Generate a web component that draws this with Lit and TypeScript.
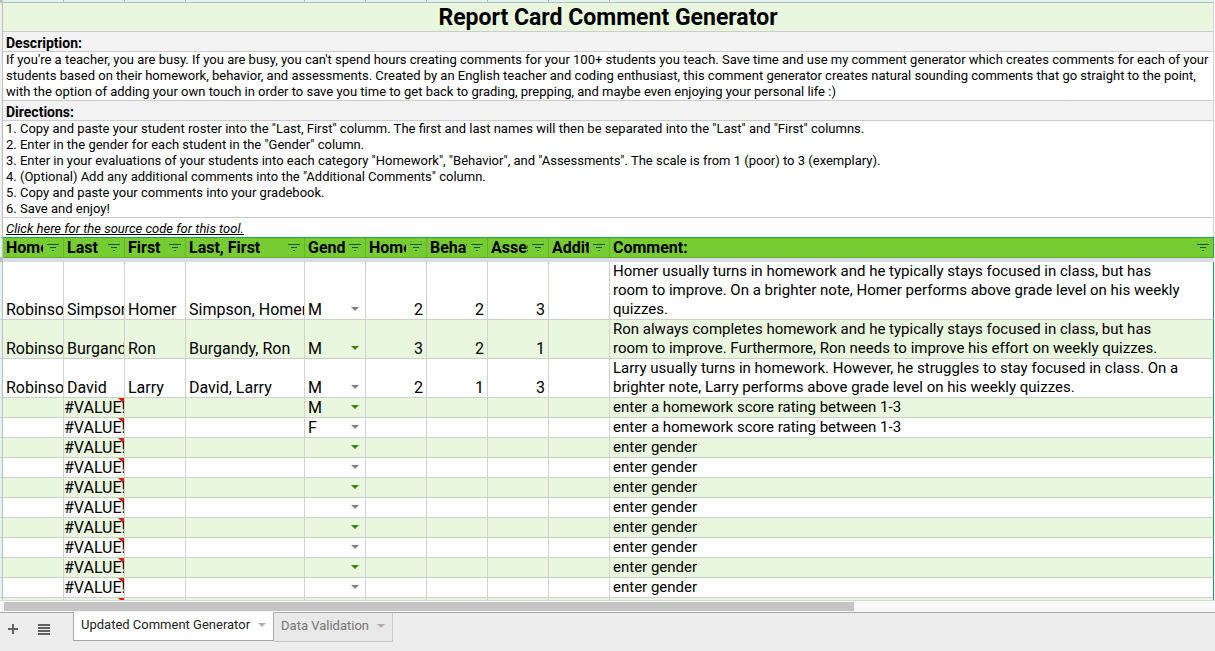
import { LitElement, html, css, svg } from "lit";
import { customElement, property, state } from "lit/decorators.js";
import { classMap } from "lit/directives/class-map.js";

interface Student {
  teacher?: string;
  last?: string;
  first?: string;
  full?: string;
  gender?: string;
  scores?: number[];
  comment: string;
}

const COLUMNS = ["Homeroom", "Last", "First", "Last, First", "Gender", "Homework", "Behavior", "Assessments", "Additional", "Comment:"];

const STUDENTS: Student[] = [
  {
    teacher: "Robinson", last: "Simpson", first: "Homer", full: "Simpson, Homer", gender: "M", scores: [2, 2, 3],
    comment: "Homer usually turns in homework and he typically stays focused in class, but has room to improve. On a brighter note, Homer performs above grade level on his weekly quizzes.",
  },
  {
    teacher: "Robinson", last: "Burgandy", first: "Ron", full: "Burgandy, Ron", gender: "M", scores: [3, 2, 1],
    comment: "Ron always completes homework and he typically stays focused in class, but has room to improve. Furthermore, Ron needs to improve his effort on weekly quizzes.",
  },
  {
    teacher: "Robinson", last: "David", first: "Larry", full: "David, Larry", gender: "M", scores: [2, 1, 3],
    comment: "Larry usually turns in homework. However, he struggles to stay focused in class. On a brighter note, Larry performs above grade level on his weekly quizzes.",
  },
  { gender: "M", comment: "enter a homework score rating between 1-3" },
  { gender: "F", comment: "enter a homework score rating between 1-3" },
  ...Array.from({ length: 9 }, () => ({ comment: "enter gender" })),
];

const DIRECTIONS = [
  '1. Copy and paste your student roster into the "Last, First" columm. The first and last names will then be separated into the "Last" and "First" columns.',
  '2. Enter in the gender for each student in the "Gender" column.',
  '3. Enter in your evaluations of your students into each category "Homework", "Behavior", and "Assessments". The scale is from 1 (poor) to 3 (exemplary).',
  '4. (Optional) Add any additional comments into the "Additional Comments" column.',
  "5. Copy and paste your comments into your gradebook.",
  "6. Save and enjoy!",
];

@customElement("sheet-table")
export class SheetTable extends LitElement {
  @property({ attribute: false }) students: Student[] = [];

  static styles = css`
    :host { display: block; }
    table { width: 100%; table-layout: fixed; border-collapse: separate; border-spacing: 0; font-size: 16px; line-height: 19px; }
    .c-edge { width: 3px; }
    .c-std { width: 61px; }
    .c-wide { width: 119px; }
    th, td {
      box-sizing: border-box; padding: 0 0 0 3px; text-align: left; vertical-align: bottom;
      overflow: hidden; white-space: nowrap; border-right: 1px solid #d0d3cd; border-bottom: 1px solid #ccd0c8;
    }
    th { height: 21px; background: #77cc34; border-top: 1px solid #1da153; border-bottom-color: #62ac27; border-right-color: #67b32c; font-weight: 700; }
    th:last-child, td:last-child { border-right-color: #16a05d; }
    .head { display: flex; align-items: center; height: 19px; }
    .head span { flex: 1; overflow: hidden; }
    .head button { flex: none; width: 20px; height: 18px; padding: 0 4px; margin: 0; border: 0; background: none; display: flex; align-items: center; }
    .edge { padding: 0; background: #e2f4f1; border-right-color: #bcbcbc; }
    th.edge { background: #e8f0fa; border-color: #bcbcbc; }
    .freeze td { height: 4px; padding: 0; border: 0; background: #d9dce6; }
    .freeze .edge { background: #bcbcbc; }
    .banded { background: #eaf7df; }
    .num { text-align: right; padding-right: 3px; }
    .wrap { white-space: normal; font-size: 15px; padding-right: 26px; }
    .error { position: relative; padding: 0; text-align: center; }
    .error span { position: relative; }
    .error::before { content: ""; position: absolute; top: 0; right: 0; border-style: solid; border-width: 0 6px 6px 0; border-color: transparent #dd2200 transparent transparent; }
    .pick { position: relative; display: block; height: 19px; }
    .pick select {
      appearance: none; display: block; width: 100%; height: 19px; margin: 0; padding: 0; border: 0; border-radius: 0;
      background: none; font: inherit; color: inherit; outline-offset: -1px;
    }
    .pick svg { position: absolute; right: 6px; top: 7px; fill: #808080; pointer-events: none; }
    .banded .pick svg { fill: #38840b; }
  `;

  private row(s: Student, i: number) {
    const scores = s.scores ?? ["", "", ""];
    return html`<tr class=${classMap({ banded: i % 2 === 1 })}>
      <td class="edge"></td>
      <td>${s.teacher}</td>
      ${s.last ? html`<td>${s.last}</td>` : html`<td class="error"><span>#VALUE!</span></td>`}
      <td>${s.first}</td>
      <td>${s.full}</td>
      <td>
        <div class="pick">
          <select aria-label="Gender, row ${i + 1}">
            ${["", "M", "F"].map((g) => html`<option ?selected=${g === (s.gender ?? "")}>${g}</option>`)}
          </select>
          <svg width="8" height="4" viewBox="0 0 8 4"><path d="M0 0H8L4 4Z" /></svg>
        </div>
      </td>
      ${scores.map((n) => html`<td class="num">${n}</td>`)}
      <td></td>
      <td class="wrap">${s.comment}</td>
    </tr>`;
  }

  render() {
    return html`<table>
      <colgroup>
        <col class="c-edge" /><col class="c-std" /><col class="c-std" /><col class="c-std" /><col class="c-wide" />
        <col class="c-std" /><col class="c-std" /><col class="c-std" /><col class="c-std" /><col class="c-std" /><col />
      </colgroup>
      <thead>
        <tr>
          <th class="edge"></th>
          ${COLUMNS.map((name) => html`<th scope="col">
            <div class="head">
              <span>${name}</span>
              <button aria-label="Filter ${name}">
                <svg width="12" height="7" viewBox="0 0 12 7" fill="#0d5a30"><path d="M0 0h12v1H0zM3 3h6v1H3zM5 6h2v1H5z" /></svg>
              </button>
            </div>
          </th>`)}
        </tr>
      </thead>
      <tbody>
        <tr class="freeze"><td class="edge"></td><td colspan="10"></td></tr>
        ${this.students.map((s, i) => this.row(s, i))}
      </tbody>
    </table>`;
  }
}

@customElement("sheet-tabs")
export class SheetTabs extends LitElement {
  @state() private active = 0;
  private tabs = ["Updated Comment Generator", "Data Validation"];

  static styles = css`
    :host { display: flex; height: 38px; background: #ededed; border-top: 1px solid #a8a8a8; }
    button { margin: 0; border: 0; font: inherit; }
    .tools { display: flex; width: 73px; box-sizing: border-box; padding: 10px 0 0 2px; }
    .tools button { width: 31px; height: 12px; padding: 0 5px; background: none; display: flex; align-items: center; }
    .tools button:first-child { padding-left: 6px; }
    .tab {
      display: flex; align-items: center; gap: 8px; height: 29px; padding: 0 7px 3px; font-size: 13px;
      color: #757575; background: #e8e8e8; border: solid #c8c8c8; border-width: 0 1px 1px 0; white-space: nowrap;
    }
    .tab.active { margin-top: -1px; color: #222; background: #fff; border: solid #a8a8a8; border-width: 0 1px 1px; box-shadow: 1px 0 1px #ccc; }
    .tab svg { fill: #b0b0b0; }
  `;

  render() {
    return html`
      <div class="tools">
        <button aria-label="Add sheet"><svg width="10" height="10" viewBox="0 0 10 10"><path d="M4 0h2v4h4v2H6v4H4V6H0V4h4z" fill="#616161" /></svg></button>
        <button aria-label="All sheets"><svg width="12" height="11" viewBox="0 0 12 11">${[0, 3, 6, 9].map((y) => svg`<rect y=${y} width="12" height="2" fill="#616161" />`)}</svg></button>
      </div>
      ${this.tabs.map((name, i) => html`<button class=${classMap({ tab: true, active: i === this.active })} @click=${() => { this.active = i; }}>
        ${name}<svg width="8" height="4" viewBox="0 0 8 4"><path d="M0 0H8L4 4Z" /></svg>
      </button>`)}
    `;
  }
}

@customElement("app-root")
export class AppRoot extends LitElement {
  static styles = css`
    :host { display: flex; flex-direction: column; height: 100vh; overflow: hidden; background: #fff; color: #000; font-family: Roboto, "Liberation Sans", sans-serif; }
    .sheet { flex: 1; min-height: 0; overflow: hidden; padding-right: 1px; }
    .columns { display: flex; height: 2px; background: #def5f0; border-bottom: 1px solid #bcbcbc; }
    .columns i { flex: none; box-sizing: border-box; width: 61px; border-right: 1px solid #bcbcbc; }
    .columns .edge { width: 3px; background: #bcbcbc; }
    .columns .wide { width: 119px; }
    .line { box-sizing: border-box; margin: 0 0 0 3px; padding: 0 3px; border-bottom: 1px solid #ccc; border-right: 1px solid #d4d4d4; box-shadow: -1px 0 #bcbcbc, -3px 0 #f0f0f0; font-size: 13px; line-height: 16px; }
    .title { background: #eaf7df; text-align: center; font-size: 23px; line-height: 27px; padding-top: 1px; font-weight: 700; }
    .label { background: #f3f3f3; font-size: 14px; line-height: 16px; padding-top: 3px; font-weight: 700; }
    .link { border-bottom: 0; padding-top: 3px; font-style: italic; }
    .link a { color: #000; }
    .steps { list-style: none; }
    .scroll { border-top: 1px solid #d8d8d8; background: #f8f8f8; padding: 1px 0 1px 4px; }
    .thumb { width: 70.2%; height: 9px; background: #c4c4c4; }
  `;

  render() {
    return html`
      <div class="sheet">
        <div class="columns">
          <i class="edge"></i><i></i><i></i><i></i><i class="wide"></i><i></i><i></i><i></i><i></i><i></i>
        </div>
        <h1 class="line title">Report Card Comment Generator</h1>
        <h2 class="line label">Description:</h2>
        <p class="line">If you're a teacher, you are busy. If you are busy, you can't spend hours creating comments for your 100+ students you teach. Save time and use my comment generator which creates comments for each of your students based on their homework, behavior, and assessments. Created by an English teacher and coding enthusiast, this comment generator creates natural sounding comments that go straight to the point, with the option of adding your own touch in order to save you time to get back to grading, prepping, and maybe even enjoying your personal life :)</p>
        <h2 class="line label">Directions:</h2>
        <ul class="line steps">${DIRECTIONS.map((d) => html`<li>${d}</li>`)}</ul>
        <p class="line link"><a href="#source">Click here for the source code for this tool.</a></p>
        <sheet-table .students=${STUDENTS}></sheet-table>
      </div>
      <div class="scroll"><div class="thumb"></div></div>
      <sheet-tabs></sheet-tabs>
    `;
  }
}
